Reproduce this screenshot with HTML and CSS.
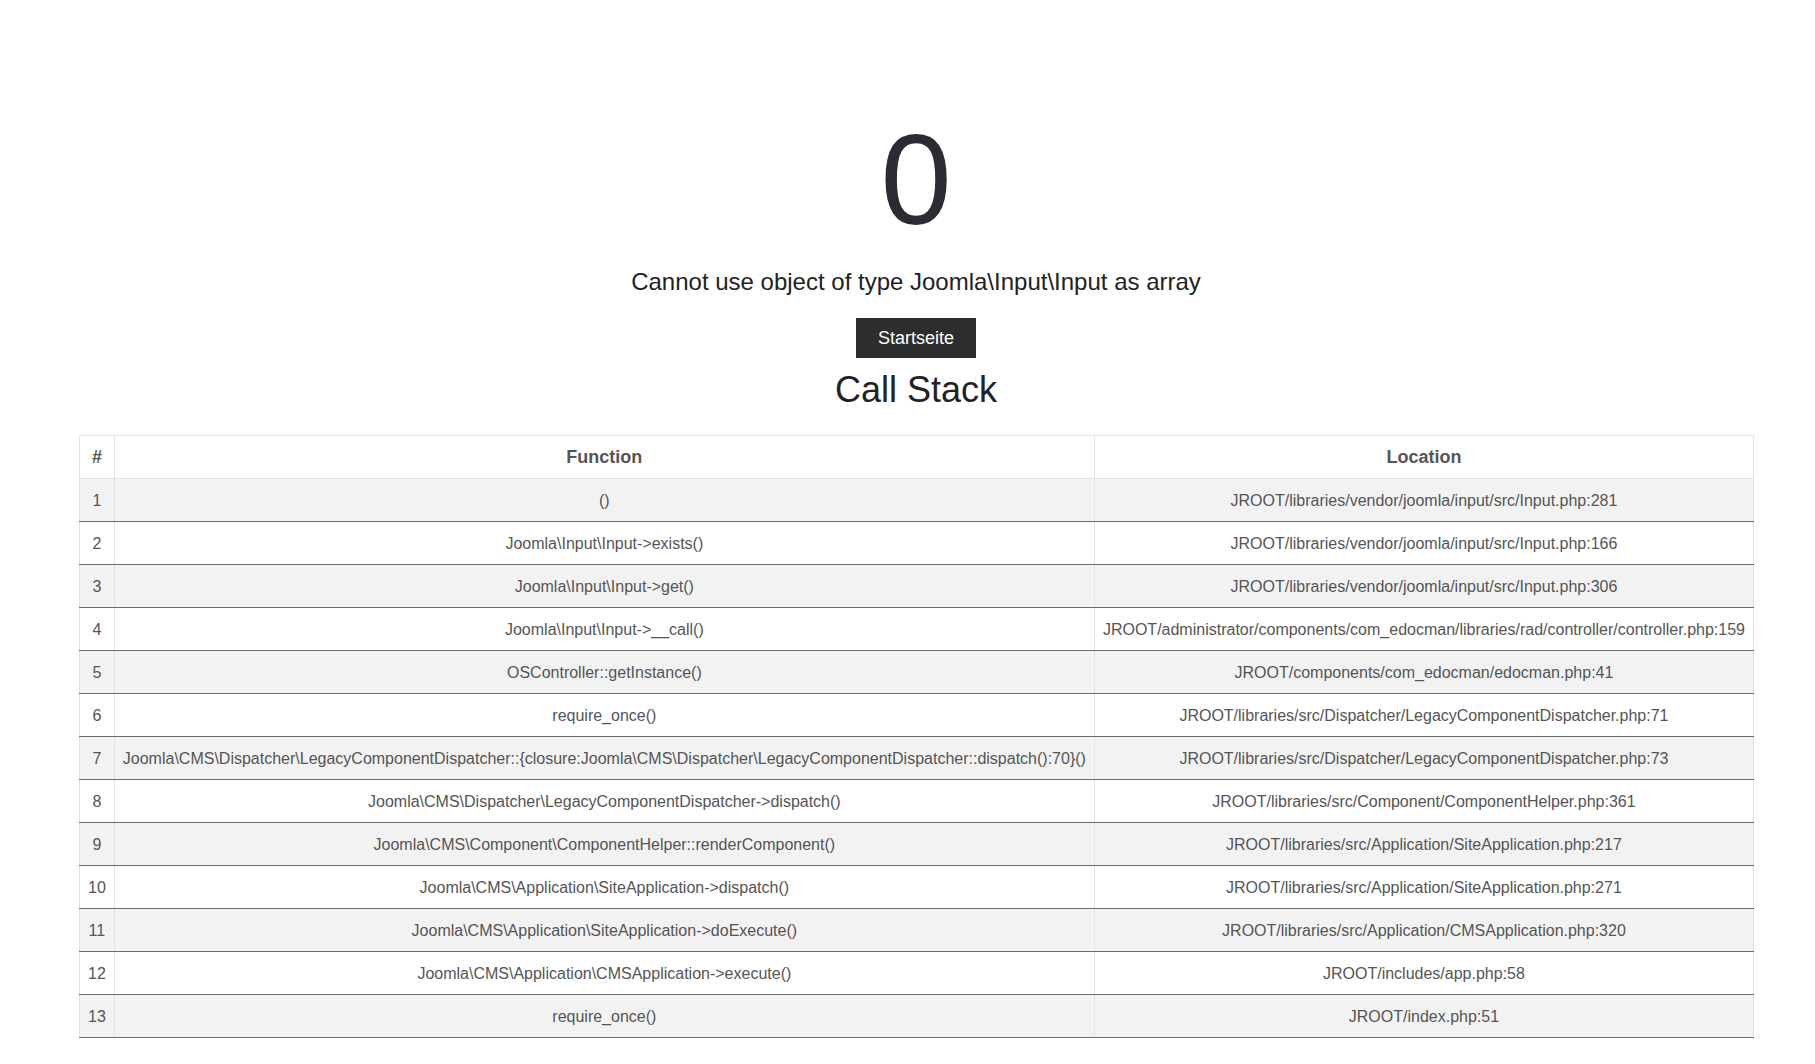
FILE: index.html
```html
<!DOCTYPE html>
<html lang="de">
<head>
<meta charset="utf-8">
<title>0 - Cannot use object of type Joomla\Input\Input as array</title>
<link rel="stylesheet" href="styles.css">
</head>
<body>
<div class="page">
  <h1 class="code">0</h1>
  <p class="message">Cannot use object of type Joomla\Input\Input as array</p>
  <div class="actions"><a class="home" href="#">Startseite</a></div>
  <h2 class="stack-title">Call Stack</h2>
  <table class="stack">
    <thead>
      <tr><th class="num">#</th><th>Function</th><th>Location</th></tr>
    </thead>
    <tbody>
      <tr><td class="num">1</td><td>()</td><td>JROOT/libraries/vendor/joomla/input/src/Input.php:281</td></tr>
      <tr><td class="num">2</td><td>Joomla\Input\Input-&gt;exists()</td><td>JROOT/libraries/vendor/joomla/input/src/Input.php:166</td></tr>
      <tr><td class="num">3</td><td>Joomla\Input\Input-&gt;get()</td><td>JROOT/libraries/vendor/joomla/input/src/Input.php:306</td></tr>
      <tr><td class="num">4</td><td>Joomla\Input\Input-&gt;__call()</td><td>JROOT/administrator/components/com_edocman/libraries/rad/controller/controller.php:159</td></tr>
      <tr><td class="num">5</td><td>OSController::getInstance()</td><td>JROOT/components/com_edocman/edocman.php:41</td></tr>
      <tr><td class="num">6</td><td>require_once()</td><td>JROOT/libraries/src/Dispatcher/LegacyComponentDispatcher.php:71</td></tr>
      <tr><td class="num">7</td><td>Joomla\CMS\Dispatcher\LegacyComponentDispatcher::{closure:Joomla\CMS\Dispatcher\LegacyComponentDispatcher::dispatch():70}()</td><td>JROOT/libraries/src/Dispatcher/LegacyComponentDispatcher.php:73</td></tr>
      <tr><td class="num">8</td><td>Joomla\CMS\Dispatcher\LegacyComponentDispatcher-&gt;dispatch()</td><td>JROOT/libraries/src/Component/ComponentHelper.php:361</td></tr>
      <tr><td class="num">9</td><td>Joomla\CMS\Component\ComponentHelper::renderComponent()</td><td>JROOT/libraries/src/Application/SiteApplication.php:217</td></tr>
      <tr><td class="num">10</td><td>Joomla\CMS\Application\SiteApplication-&gt;dispatch()</td><td>JROOT/libraries/src/Application/SiteApplication.php:271</td></tr>
      <tr><td class="num">11</td><td>Joomla\CMS\Application\SiteApplication-&gt;doExecute()</td><td>JROOT/libraries/src/Application/CMSApplication.php:320</td></tr>
      <tr><td class="num">12</td><td>Joomla\CMS\Application\CMSApplication-&gt;execute()</td><td>JROOT/includes/app.php:58</td></tr>
      <tr><td class="num">13</td><td>require_once()</td><td>JROOT/index.php:51</td></tr>
    </tbody>
  </table>
</div>
</body>
</html>
```

FILE: styles.css
```css
html, body {
  margin: 0;
  padding: 0;
  background: #ffffff;
}

body {
  font-family: "Liberation Sans", Arial, sans-serif;
  color: #222222;
}

.page {
  width: 1674px;
  margin-left: 79px;
  padding-top: 116px;
  text-align: center;
}

.code {
  margin: 0;
  font-size: 128px;
  line-height: 128px;
  font-weight: 400;
  color: #2b2b33;
}

.message {
  margin: 26px 0 0;
  font-size: 24px;
  line-height: 24px;
  color: #222222;
}

.actions {
  display: flex;
  justify-content: center;
  margin-top: 24px;
}

.home {
  display: block;
  background: #2d2d2d;
  color: #ffffff;
  font-size: 18px;
  line-height: 24px;
  padding: 8px 22px;
  text-decoration: none;
}

.stack-title {
  margin: 12px 0 0;
  font-size: 36px;
  line-height: 40px;
  font-weight: 400;
  color: #222222;
}

.stack {
  width: 100%;
  margin-top: 25px;
  border-collapse: collapse;
  border: 1px solid #e3e3e3;
  color: #555555;
  font-size: 16px;
}

.stack th,
.stack td {
  padding: 9px 8px;
  line-height: 24px;
  text-align: center;
  border-left: 1px solid #e3e3e3;
  border-right: 1px solid #e3e3e3;
  white-space: nowrap;
}

.stack th {
  font-size: 18px;
  font-weight: 700;
  color: #555555;
  border-bottom: 1px solid #e3e3e3;
}

.stack tbody td {
  padding-top: 10px;
  padding-bottom: 8px;
  border-bottom: 1px solid #6b6b6b;
}

.stack tbody tr:nth-child(odd) {
  background: #f2f2f2;
}
```
